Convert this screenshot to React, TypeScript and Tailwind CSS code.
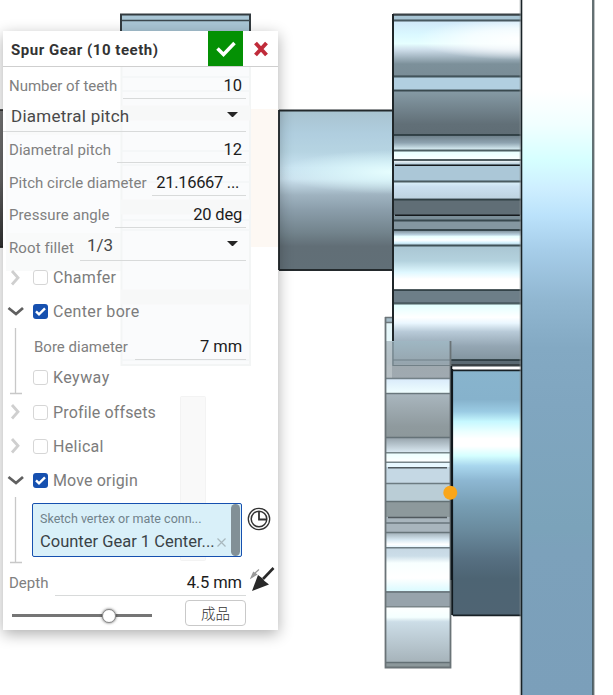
import type { ReactNode } from "react";

type Stop = [number, string];
type Band = [number, number, Stop[]];

const upperGear: Band[] = [
  [15, 20, [[0, "#a8c5d4"]]],
  [20, 76, [[0, "#cfe6f8"], [0.25, "#daf8ff"], [0.42, "#e6ffff"], [0.52, "#d0e0ec"], [0.64, "#a9bbc7"], [0.78, "#7c909a"], [1, "#7a8d97"]]],
  [76, 90, [[0, "#b2cfe0"]]],
  [90, 135, [[0, "#879ca7"], [0.75, "#616f77"], [1, "#5f6d75"]]],
  [135, 150, [[0, "#6c7d87"], [0.5, "#8ea3b0"], [1, "#e4faff"]]],
  [150, 160, [[0, "#e4ffff"], [1, "#ffffff"]]],
  [160, 165, [[0, "#ffffff"], [1, "#9cbccd"]]],
  [165, 181, [[0, "#abc7d7"]]],
  [181, 199, [[0, "#def4fc"], [0.3, "#cbe0f0"], [1, "#bdd2df"]]],
  [199, 215, [[0, "#606e76"]]],
  [215, 220, [[0, "#7b8e98"]]],
  [220, 230, [[0, "#8497a1"]]],
  [230, 245, [[0, "#74858f"], [0.3, "#b9d0de"], [0.42, "#e8ffff"], [0.65, "#ffffff"], [0.8, "#d9f4ff"], [1, "#aac8d8"]]],
  [245, 290, [[0, "#a9c5d2"], [0.35, "#b4d2de"], [0.6, "#dff8ff"], [0.75, "#ffffff"], [1, "#ffffff"]]],
  [290, 303, [[0, "#6d7e88"]]],
  [303, 360, [[0, "#dfffff"], [0.25, "#ffffff"], [0.35, "#eaf7ff"], [0.5, "#b8cad8"], [0.75, "#94a6b3"], [1, "#82949f"]]],
  [360, 365, [[0, "#5a6972"]]],
];
const upperEdges = [20.5, 76.5, 90.5, 135, 150.5, 160, 181.5, 199.5, 220.5, 230, 245.5, 290, 303.5, 360];

const lowerGear: Band[] = [
  [341, 378, [[0, "#9fb7c3"], [0.6, "#96a5ae"], [0.68, "#9fa9af"], [1, "#a0aab1"]]],
  [378, 393, [[0, "#d8e9fa"], [1, "#f0ffff"]]],
  [393, 437, [[0, "#aab7bf"], [0.75, "#8f9a9e"], [1, "#8d989b"]]],
  [437, 452, [[0, "#93a0a8"], [1, "#dbeaf3"]]],
  [452, 462, [[0, "#eaffff"], [1, "#ffffff"]]],
  [462, 467, [[0, "#e8f8ff"]]],
  [467, 483, [[0, "#c5d8e4"]]],
  [483, 501, [[0, "#bacdd6"]]],
  [501, 517, [[0, "#8d999c"]]],
  [517, 532, [[0, "#a8b5bd"]]],
  [532, 547, [[0, "#9baab2"], [0.5, "#d7e8f2"], [0.8, "#ffffff"], [1, "#e0f4ff"]]],
  [547, 591, [[0, "#c6d7e3"], [0.2, "#cbdde8"], [0.36, "#f8ffff"], [0.7, "#ffffff"], [1, "#dafaff"]]],
  [591, 606, [[0, "#97a3ab"]]],
  [606, 662, [[0, "#ffffff"], [0.2, "#f4ffff"], [0.28, "#ccdde7"], [1, "#a6b3ba"]]],
  [662, 667, [[0, "#8c989b"]]],
];
const lowerEdges = [378.5, 393.5, 437.5, 452.7, 462.3, 483.5, 501.5, 523, 532.5, 547.8, 592, 606.7, 662.5];

function Bands({ id, bands, x, width }: { id: string; bands: Band[]; x: number; width: number }) {
  return (
    <>
      {bands.map(([top, bottom, stops], i) => (
        <g key={top}>
          <linearGradient id={`${id}${i}`} x1="0" y1="0" x2="0" y2="1">
            {stops.map(([offset, color]) => (
              <stop key={offset} offset={offset} stopColor={color} />
            ))}
          </linearGradient>
          <rect x={x} y={top} width={width} height={bottom - top + 0.5} fill={`url(#${id}${i})`} />
        </g>
      ))}
    </>
  );
}

function Scene() {
  return (
    <svg className="absolute inset-0" width="613" height="695" viewBox="0 0 613 695">
      <Bands id="stub" x={0} width={4} bands={[[110, 247, [[0, "#777777"], [0.5, "#666666"], [1, "#333333"]]]]} />
      <path d="M0 110H4M0 247H4" stroke="#222" strokeWidth="1.5" />
      <rect x="121" y="14.5" width="129" height="40" fill="#a9c6d5" stroke="#333b3f" strokeWidth="2" />
      <path d="M122 20.5H250" stroke="#3c484e" strokeWidth="1.5" />

      <Bands
        id="shaft"
        x={279}
        width={114}
        bands={[[110, 270, [[0, "#a8c3d0"], [0.15, "#b0cedf"], [0.26, "#b6d4e2"], [0.36, "#c8e3f1"], [0.43, "#cbe2ef"], [0.53, "#9fb3c0"], [0.62, "#8b9eab"], [0.76, "#73848d"], [0.85, "#616e76"], [1, "#616f77"]]]]}
      />
      <radialGradient id="shine">
        <stop offset="0" stopColor="#e8ffff" stopOpacity="0.95" />
        <stop offset="0.5" stopColor="#e2ffff" stopOpacity="0.5" />
        <stop offset="1" stopColor="#e0ffff" stopOpacity="0" />
      </radialGradient>
      <clipPath id="shaftClip"><rect x="279" y="110" width="114" height="160" /></clipPath>
      <ellipse cx="393" cy="172" rx="115" ry="22" fill="url(#shine)" clipPath="url(#shaftClip)" />
      <path d="M279 110.5H392M279 270H392M279 110V270" fill="none" stroke="#23292c" strokeWidth="1.8" />

      <Bands
        id="plate"
        x={522}
        width={71}
        bands={[[0, 695, [[0, "#fff"], [0.13, "#fff"], [0.18, "#f0ffff"], [0.23, "#d6ffff"], [0.27, "#ceefff"], [0.31, "#bbe2fb"], [0.36, "#a6cde9"], [0.43, "#91b7d1"], [0.5, "#83a9c3"], [0.58, "#80a6c0"], [0.76, "#7ba3ba"], [0.79, "#7ca1bb"], [1, "#7b9fba"]]]]}
      />
      <Bands
        id="hub"
        x={452}
        width={70}
        bands={[[370, 615, [[0, "#88b4cd"], [0.12, "#86b2cc"], [0.17, "#9bcce4"], [0.21, "#c6f8ff"], [0.25, "#eaffff"], [0.28, "#ffffff"], [0.31, "#ffffff"], [0.35, "#d4ffff"], [0.39, "#a9d7ee"], [0.45, "#8db7d2"], [0.55, "#779eb4"], [0.65, "#6a8b9e"], [0.77, "#566f81"], [0.85, "#4d6473"], [1, "#4f6473"]]]]}
      />
      <path d="M453 370.3H521M453 615.3H521" stroke="#182126" strokeWidth="1.8" />
      <path d="M452 369V615" stroke="#10181d" strokeWidth="2.2" />

      <Bands id="upper" x={393} width={129} bands={upperGear} />
      <clipPath id="toothClip"><rect x="393" y="21" width="128" height="55" /></clipPath>
      <radialGradient id="glare">
        <stop offset="0" stopColor="#fff" />
        <stop offset="0.5" stopColor="#fff" stopOpacity="0.7" />
        <stop offset="1" stopColor="#fff" stopOpacity="0" />
      </radialGradient>
      <ellipse cx="521" cy="39" rx="105" ry="21" fill="url(#glare)" clipPath="url(#toothClip)" />
      {upperEdges.map((y) => (
        <path key={y} d={`M393 ${y}H521`} stroke="#26343a" strokeOpacity="0.8" strokeWidth="1.8" />
      ))}
      <path d="M395 165.2H520M395 215.3H520" stroke="#15191c" strokeWidth="1.4" />
      <path d="M393 14.6H521M393 365.3H521" stroke="#394145" strokeWidth="2.4" />
      <path d="M393 14V366" stroke="#1f2629" strokeWidth="2" />

      <rect x="386" y="318" width="6" height="24" fill="#e6f7fa" />
      <rect x="386" y="318" width="6" height="5" fill="#a5bcc8" />
      <path d="M385 317.5H392M386 322.5H392" stroke="#6d767a" strokeWidth="1.4" />
      <Bands id="lower" x={386} width={65} bands={lowerGear} />
      <rect x="386" y="341" width="6" height="37" fill="#c6cfd2" opacity="0.6" />
      <path d="M393 342V365.5H450M393 360H450" fill="none" stroke="#718087" strokeWidth="1.2" />
      {lowerEdges.map((y) => (
        <path key={y} d={`M386 ${y}H450`} stroke="#59666b" strokeOpacity="0.8" strokeWidth="1.6" />
      ))}
      <path d="M388 467.7H447M388 517.5H447" stroke="#50595e" strokeWidth="1.4" />
      <path d="M385.5 317V667.5H450.5V341" fill="none" stroke="#6a7377" strokeWidth="1.8" />
      <path d="M451.5 366V580" stroke="#10181d" strokeWidth="1.6" />

      <path d="M521.5 0V695" stroke="#182226" strokeWidth="1.6" />
      <path d="M520.2 0V695M594.3 0V695" stroke="#8d9495" strokeOpacity="0.7" strokeWidth="1" />
      <path d="M593 0V695" stroke="#3f4e52" strokeWidth="1.6" />
      <circle cx="450.3" cy="492.7" r="7" fill="#faa61a" />
    </svg>
  );
}

// Faint view of the model behind the translucent dialog
function Ghost() {
  return (
    <svg className="absolute left-0 top-0" width="275" height="599" viewBox="3 31 275 599">
      <rect x="6" y="110" width="115" height="161" fill="#f9fafa" />
      <rect x="8" y="135" width="113" height="98" fill="#fbfcfd" />
      <rect x="250" y="109" width="28" height="138" fill="#fdf8f3" />
      <rect x="121.500" y="60" width="128.500" height="305" fill="#fafbfc" stroke="#f3f5f5" strokeWidth="2" />
      <path d="M121 77H250M121 91H250M121 151H250M121 165H250M121 182H250M121 220H250M121 230H250M121 360H250" stroke="#f4f6f6" strokeWidth="1.500" />
      <path d="M121 113H250M121 207H250M121 297H250" stroke="#f7f8f8" strokeWidth="15" />
      <rect x="180.500" y="396.500" width="25" height="164" rx="1" fill="#f9f9f9" stroke="#f3f3f3" />
    </svg>
  );
}

const label = "shrink-0 whitespace-nowrap text-[15px] leading-5 text-[#808080]";
const value = "whitespace-nowrap text-[16.5px] leading-5 text-[#1c1c1c]";

function Field({ name, height, left, track, children }: { name: string; height: string; left: string; track: string; children: ReactNode }) {
  return (
    <div className={`flex items-end ${height}`}>
      <span className={`${label} ${track} w-0 pb-[3px] pl-[6px]`}>{name}</span>
      <div className={`ml-auto mr-[32px] flex justify-end border-b border-[#d8dada] pb-[2px] pr-[4px] ${left}`}>{children}</div>
    </div>
  );
}

function Caret() {
  return (
    <svg width="11" height="6" viewBox="0 0 11 6">
      <path d="M0 0H11L6.500 4.500Q5.500 5.500 4.500 4.500Z" fill="#252525" />
    </svg>
  );
}

function Option({ name, open, height = "h-[34px]", track }: { name: string; open?: boolean; height?: string; track: string }) {
  return (
    <div className={`flex items-center ${height}`}>
      <svg className="ml-[4px] shrink-0" width="18" height="18" viewBox="0 0 18 18" fill="none" strokeWidth="2.800">
        {open ? <path d="M1.500 6L9 12L16 6" stroke="#606060" /> : <path d="M5 2L11 8.700L5 15.500" stroke="#cfcfcf" />}
      </svg>
      <Box checked={open} />
      <span className={`ml-[5px] pt-px text-[16px] leading-5 text-[#7c7c7c] ${track}`}>{name}</span>
    </div>
  );
}

function Box({ checked }: { checked?: boolean }) {
  return (
    <span className={`ml-[8px] flex size-[15px] shrink-0 items-center justify-center rounded-[3px] ${checked ? "bg-[#1650af]" : "border border-[#d6d6d6] bg-white"}`}>
      {checked && (
        <svg width="11" height="9" viewBox="0 0 11 9">
          <path d="M1 4.300L4 7.300L10 1.300" fill="none" stroke="white" strokeWidth="2.400" />
        </svg>
      )}
    </span>
  );
}

function Bracket() {
  return (
    <svg className="absolute left-[7px] top-0" width="12" height="67" viewBox="0 0 12 67">
      <path d="M5.500 0V65.500M0 65.500H12" fill="none" stroke="#c8c8c8" strokeWidth="1.300" />
    </svg>
  );
}

export default function App() {
  return (
    <main className="relative h-[695px] w-[613px] overflow-hidden bg-white font-[Roboto,'Noto_Sans_CJK_SC',sans-serif]">
      <Scene />
      <section className="absolute left-[3px] top-[31px] flex h-[599px] w-[275px] flex-col bg-white shadow-[0_4px_14px_rgba(0,0,0,0.32)]">
        <Ghost />
        <header className="relative flex h-[36px] shrink-0 items-center border-b border-[#cfcfcf] bg-white">
          <h1 className="whitespace-nowrap pl-[8px] pt-[2px] text-[15px] font-bold leading-5 tracking-[0.52px] text-[#333]">Spur Gear (10 teeth)</h1>
          <button className="ml-auto flex h-[35px] w-[35px] items-center justify-center bg-[#049104]">
            <svg width="20" height="16" viewBox="0 0 20 16">
              <path d="M1.500 7.500L7.500 13.500L18.500 2" fill="none" stroke="white" strokeWidth="3.500" />
            </svg>
          </button>
          <button className="flex h-[35px] w-[35px] items-center justify-center">
            <svg width="16" height="16" viewBox="0 0 16 16">
              <path d="M2.500 2L13.500 14M13.500 2L2.500 14" stroke="#c02b3a" strokeWidth="3.900" />
            </svg>
          </button>
        </header>
        <div className="relative flex flex-col">
          <Field name="Number of teeth" height="h-[32px]" left="w-[123px]" track="tracking-[-0.04px]">
            <span className={value}>10</span>
          </Field>
          <div className="mr-[32px] flex h-[33px] items-center border-b border-[#d8dada] pl-[8px] pr-[8px]">
            <span className="pt-[2px] text-[17px] leading-5 tracking-[0.26px] text-[#484848]">Diametral pitch</span>
            <span className="ml-auto"><Caret /></span>
          </div>
          <Field name="Diametral pitch" height="h-[31px]" left="w-[129px]" track="tracking-[0.06px]">
            <span className={value}>12</span>
          </Field>
          <Field name="Pitch circle diameter" height="h-[33px]" left="w-[94px]" track="tracking-[0.04px]">
            <span className={`${value} mr-[3px] tracking-[-0.3px]`}>21.16667 ...</span>
          </Field>
          <Field name="Pressure angle" height="h-[32px]" left="w-[131px]" track="tracking-[0.1px]">
            <span className={`${value} tracking-[-0.2px]`}>20 deg</span>
          </Field>
          <Field name="Root fillet" height="h-[33px]" left="w-[166px]" track="tracking-[0.1px]">
            <div className="flex w-full items-center pb-[3px] pl-[7px] pr-[4px]">
              <span className="text-[17px] leading-5 text-[#484848]">1/3</span>
              <span className="ml-auto pb-[2px]"><Caret /></span>
            </div>
          </Field>
          <Option name="Chamfer" height="h-[33px]" track="tracking-[0.3px]" />
          <Option name="Center bore" open track="tracking-[0.35px]" />
          <div className="relative h-[67px]">
            <Bracket />
            <div className="pl-[25px]">
              <Field name="Bore diameter" height="h-[32px]" left="w-[111px]" track="tracking-[0px]">
                <span className={`${value} tracking-[-0.1px]`}>7 mm</span>
              </Field>
              <div className="flex h-[35px] items-center">
                <span className="-ml-[3px]"><Box /></span>
                <span className="ml-[5px] text-[16px] leading-5 tracking-[0.45px] text-[#7c7c7c]">Keyway</span>
              </div>
            </div>
          </div>
          <Option name="Profile offsets" track="tracking-[0.15px]" />
          <Option name="Helical" track="tracking-[0.3px]" />
          <Option name="Move origin" open track="tracking-[0.15px]" />
          <div className="relative flex h-[66px] pl-[29px] pt-[6px]">
            <Bracket />
            <div className="flex h-[54px] w-[210px] rounded-[2px] border border-[#1650af] bg-[#d9f0f9]">
              <div className="flex flex-1 flex-col pl-[7px] pt-[5px]">
                <span className="whitespace-nowrap text-[12.5px] leading-5 tracking-[0px] text-[#70828b]">Sketch vertex or mate conn...</span>
                <span className="flex items-center whitespace-nowrap pt-[3px] text-[16.5px] leading-5 text-[#3a4347]">
                  Counter Gear 1 Center...
                  <svg className="ml-[2px] shrink-0" width="9" height="9" viewBox="0 0 9 9"><path d="M.5 .5L8.500 8.500M8.500 .5L.5 8.500" stroke="#a9b8be" strokeWidth="1.200" /></svg>
                </span>
              </div>
              <span className="mr-px h-[52px] w-[9px] shrink-0 rounded-full bg-[#829096]" />
            </div>
            <svg className="ml-[5px] mt-[4px]" width="24" height="24" viewBox="0 0 24 24" fill="none" stroke="#333">
              <circle cx="12" cy="12" r="10.700" strokeWidth="1.300" />
              <circle cx="12" cy="12" r="7.800" strokeWidth="1.500" />
              <path d="M12 4.500V12.500H19.500" strokeWidth="1.800" />
            </svg>
          </div>
          <div className="flex">
            <div className="w-[275px] shrink-0">
              <Field name="Depth" height="h-[33px]" left="w-[191px]" track="tracking-[0px]">
                <span className={`${value} tracking-[-0.1px]`}>4.5 mm</span>
              </Field>
            </div>
            <svg className="-ml-[28px] mt-[4px] shrink-0" width="26" height="26" viewBox="0 0 26 26">
              <path d="M23.500 1L13 12" stroke="#292929" strokeWidth="2.600" />
              <path d="M2 24L8 8L12 11L14.500 14L19 17.500Z" fill="#292929" />
              <path d="M1 11L3.500 5.500L6.500 7.500Z M5 6L9 2.500" fill="#999" stroke="#999" strokeWidth="1.200" />
            </svg>
          </div>
          <div className="flex h-[34px] pl-[9px] pt-[4px]">
            <div className="relative mt-[14px] h-[3px] w-[140px] bg-[#757575]">
              <span className="absolute -top-[5px] left-[90px] size-[14px] rounded-full border border-[#888] bg-white shadow-[0_0_3px_rgba(0,0,0,0.6)]" />
            </div>
            <button className="ml-[33px] h-[26px] w-[61px] rounded-[4px] border border-[#c9c9c9] bg-white font-['Noto_Sans_CJK_SC',sans-serif] text-[14.5px] font-light leading-5 text-[#333]">成品</button>
          </div>
        </div>
      </section>
    </main>
  );
}
